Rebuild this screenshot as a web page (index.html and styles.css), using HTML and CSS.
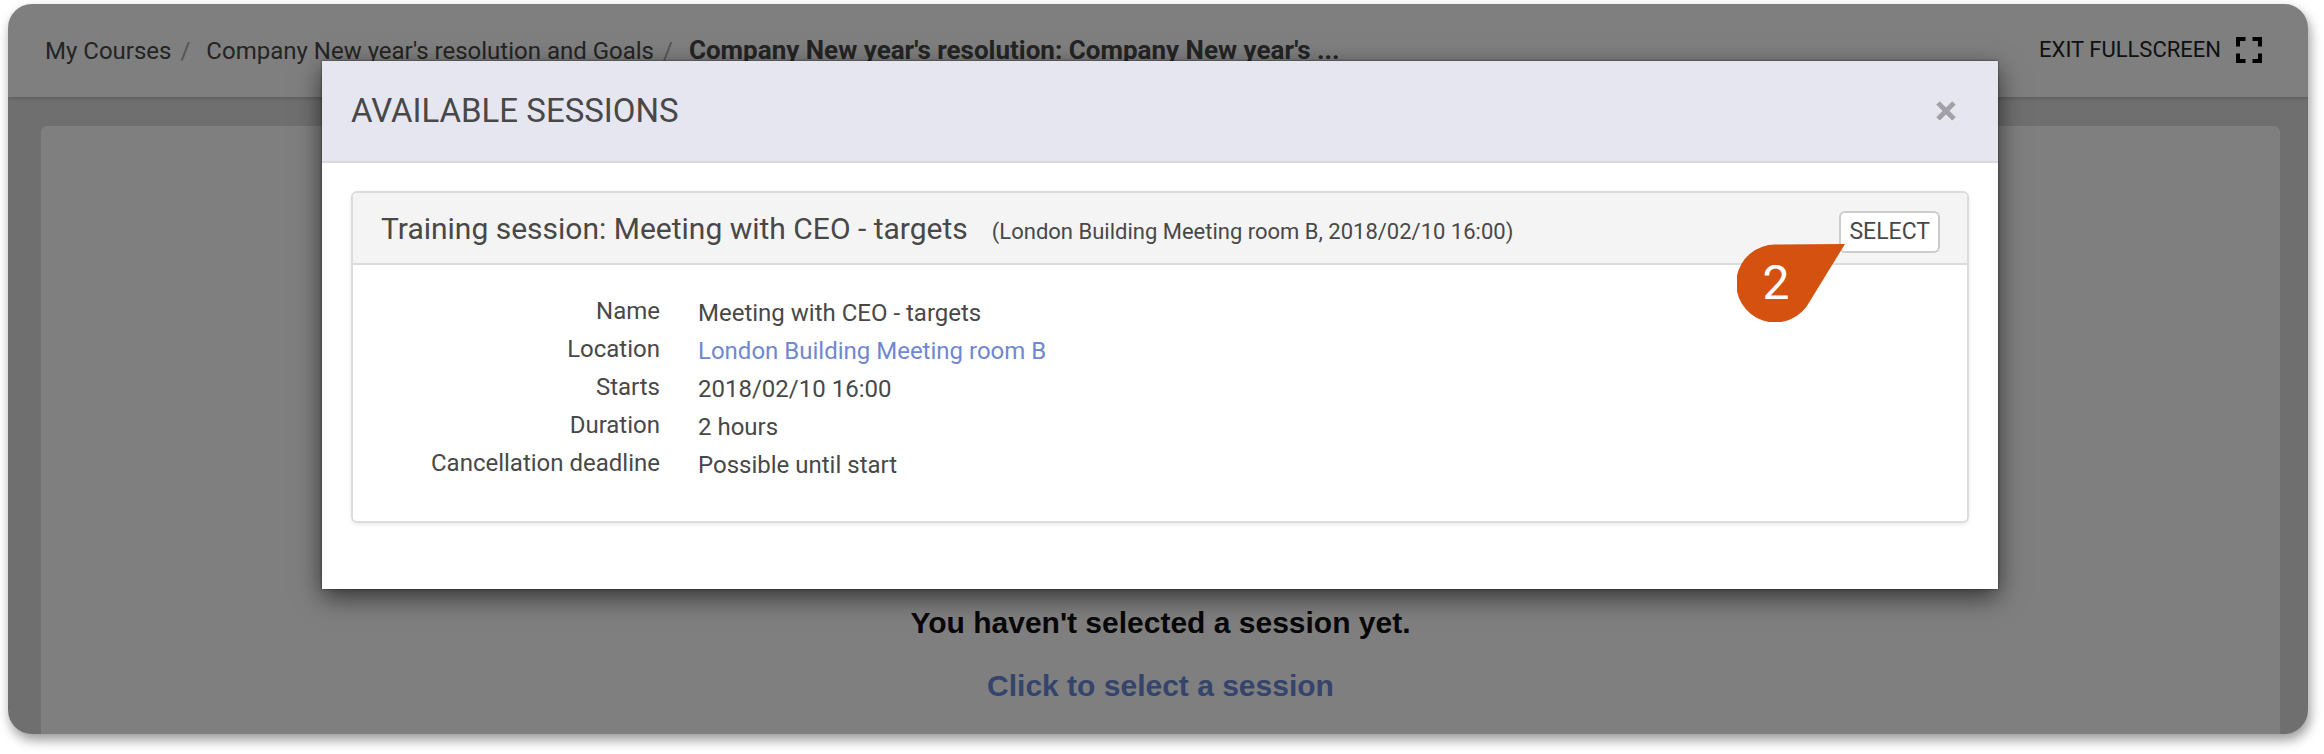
FILE: index.html
```html
<!DOCTYPE html>
<html lang="en">
<head>
<meta charset="utf-8">
<title>Available sessions</title>
<link rel="stylesheet" href="styles.css">
</head>
<body>
<div class="frame">
  <header class="topbar">
    <nav class="breadcrumb" aria-label="Breadcrumb">
      <a href="#">My Courses</a>
      <span class="separator">/</span>
      <a href="#">Company New year's resolution and Goals</a>
      <span class="separator">/</span>
      <span class="current">Company New year's resolution: Company New year's ...</span>
    </nav>
    <button class="fullscreen" type="button">
      EXIT FULLSCREEN
      <svg class="fullscreen-icon" viewBox="0 0 28 28" aria-hidden="true">
        <path d="M3 10.500V3H10.500M17.500 3H25V10.500M25 17.500V25H17.500M10.500 25H3V17.500" fill="none" stroke="#000" stroke-width="4"/>
      </svg>
    </button>
  </header>
  <main class="page">
    <section class="card">
      <p class="notice">You haven't selected a session yet.</p>
      <a class="notice-link" href="#">Click to select a session</a>
    </section>
  </main>
  <div class="overlay">
    <div class="modal" role="dialog" aria-labelledby="modal-title">
      <div class="modal-header">
        <h1 class="modal-title" id="modal-title">AVAILABLE SESSIONS</h1>
        <button class="close" type="button" aria-label="Close">
          <svg class="close-icon" viewBox="0 0 22 22" aria-hidden="true">
            <path d="M3 3l16 16M19 3L3 19" stroke="#fff" stroke-width="5" transform="translate(0 1)" opacity=".6"/>
            <path d="M3 3l16 16M19 3L3 19" stroke="#a2a2a6" stroke-width="5"/>
          </svg>
        </button>
      </div>
      <div class="modal-body">
        <section class="panel">
          <div class="panel-header">
            <h2 class="panel-title">Training session: Meeting with CEO - targets</h2>
            <span class="panel-note">(London Building Meeting room B, 2018/02/10 16:00)</span>
            <div class="action">
              <button class="select" type="button">SELECT</button>
              <div class="marker">
                <svg class="marker-shape" viewBox="0 0 108 78" aria-hidden="true">
                  <path d="M39 .5L108 0 73 57A39 39 0 1 1 39 .5Z" fill="#d55110"/>
                </svg>
                <span class="marker-number">2</span>
              </div>
            </div>
          </div>
          <dl class="details">
            <dt>Name</dt><dd>Meeting with CEO - targets</dd>
            <dt>Location</dt><dd><a href="#">London Building Meeting room B</a></dd>
            <dt>Starts</dt><dd>2018/02/10 16:00</dd>
            <dt>Duration</dt><dd>2 hours</dd>
            <dt>Cancellation deadline</dt><dd>Possible until start</dd>
          </dl>
        </section>
      </div>
    </div>
  </div>
</div>
</body>
</html>
```
FILE: styles.css
```css
* {
  box-sizing: border-box;
}

body {
  margin: 0;
  padding: 4px 16px 20px 8px;
  background: #fff;
  color: #484848;
  font: 24px/38px Roboto, sans-serif;
}

h1, h2, p, dl, dd {
  margin: 0;
  font-weight: 400;
}

a {
  color: inherit;
  text-decoration: none;
}

button {
  font: inherit;
  color: inherit;
  cursor: pointer;
}

.frame {
  position: relative;
  display: flex;
  flex-direction: column;
  min-height: calc(100vh - 24px);
  border-radius: 24px;
  overflow: clip;
  background: #dedede;
  box-shadow: 2px 6px 12px rgba(0, 0, 0, .4);
}

.topbar {
  display: flex;
  justify-content: space-between;
  align-items: flex-start;
  padding: 27px 45px 27px 37px;
  background: #fff;
  box-shadow: 0 1px 4px rgba(0, 0, 0, .2);
}

.breadcrumb {
  display: flex;
  align-items: baseline;
}

.separator {
  margin: 0 16px 0 9px;
  color: #aaa;
}

.current {
  font-size: 26px;
  font-weight: 700;
}

.fullscreen {
  display: flex;
  align-items: center;
  gap: 14px;
  padding: 0;
  border: 0;
  background: none;
  color: #222;
  font-size: 22px;
}

.fullscreen-icon {
  width: 28px;
  height: 28px;
}

.page {
  display: flex;
  flex: 1;
  padding: 29px 28px 0 33px;
}

.card {
  display: flex;
  flex: 1;
  flex-direction: column;
  align-items: center;
  justify-content: flex-end;
  gap: 25px;
  padding-bottom: 29px;
  border-radius: 6px 6px 0 0;
  background: #fff;
  font: bold 30px/38px "Liberation Sans", Arial, sans-serif;
}

.notice {
  font-weight: inherit;
  color: #111;
}

.notice-link {
  color: #6888d8;
}

.overlay {
  position: absolute;
  inset: 0;
  padding: 57px 310px 0 314px;
  background: rgba(0, 0, 0, .5);
}

.modal {
  background: #fff;
  box-shadow: 0 8px 24px rgba(0, 0, 0, .6), 0 0 2px rgba(0, 0, 0, .6);
}

.modal-header {
  display: flex;
  justify-content: space-between;
  align-items: center;
  height: 102px;
  padding: 0 41px 0 29px;
  border-bottom: 2px solid #dadada;
  background: #e6e6f0;
}

.modal-title {
  font-size: 33px;
}

.close {
  display: flex;
  padding: 0;
  border: 0;
  background: none;
}

.close-icon {
  width: 22px;
  height: 22px;
  overflow: visible;
}

.modal-body {
  padding: 28px 29px 66px;
}

.panel {
  border: 2px solid #dcdcdc;
  border-radius: 6px;
  box-shadow: 0 2px 4px rgba(0, 0, 0, .08);
}

.panel-header {
  display: flex;
  align-items: baseline;
  padding: 17px 27px 10px 28px;
  border-bottom: 2px solid #dcdcdc;
  border-radius: 4px 4px 0 0;
  background: #f4f4f4;
}

.panel-title {
  margin-right: 24px;
  font-size: 30px;
}

.panel-note {
  font-size: 22px;
}

.action {
  position: relative;
  margin-left: auto;
}

.select {
  display: block;
  padding: 0 8px;
  border: 2px solid #ccc;
  border-radius: 6px;
  background: #fff;
  font-size: 23px;
}

.marker {
  position: absolute;
  top: 33px;
  right: 95px;
  width: 108px;
  height: 78px;
}

.marker-shape {
  display: block;
  width: 100%;
  height: 100%;
}

.marker-number {
  position: absolute;
  inset: 0 30px 0 0;
  color: #fff;
  font-size: 48px;
  line-height: 78px;
  text-align: center;
}

.details {
  display: grid;
  grid-template-columns: 279px 1fr;
  column-gap: 38px;
  padding: 28px 28px 38px;
}

.details dt {
  padding-bottom: 2px;
  line-height: 36px;
  text-align: right;
}

.details dd {
  padding-top: 2px;
  line-height: 36px;
}

.details a {
  color: #7088d0;
}
```
